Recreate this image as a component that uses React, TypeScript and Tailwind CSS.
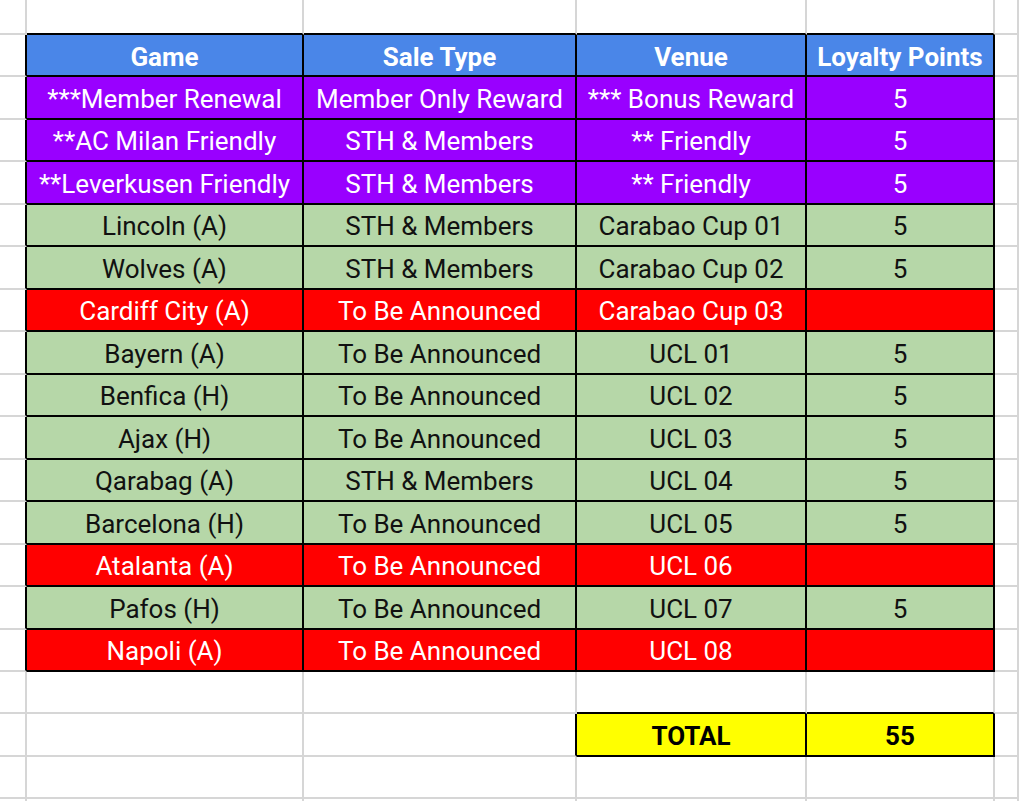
import React from "react";

type Tone = "blue" | "purple" | "green" | "red" | "yellow" | "none";

const bgMap: Record<Tone, string> = {
  blue: "bg-[#4a86e8] text-white font-bold",
  purple: "bg-[#9900ff] text-white",
  green: "bg-[#b6d7a8] text-[#111111]",
  red: "bg-[#ff0000] text-white",
  yellow: "bg-[#ffff00] text-black font-bold",
  none: "bg-white",
};

function Cell({
  text = "",
  tone = "none",
  r = false,
  b = false,
}: {
  text?: string;
  tone?: Tone;
  r?: boolean;
  b?: boolean;
}) {
  return (
    <div
      className={`flex items-center justify-center overflow-hidden whitespace-nowrap pt-[3px] border-r-2 border-b-2 ${
        r ? "border-r-black" : "border-r-[#d6d6d6]"
      } ${b ? "border-b-black" : "border-b-[#d6d6d6]"} ${bgMap[tone]}`}
    >
      {text}
    </div>
  );
}

const rows: { c: [string, string, string, string]; t: Tone }[] = [
  { c: ["Game", "Sale Type", "Venue", "Loyalty Points"], t: "blue" },
  { c: ["***Member Renewal", "Member Only Reward", "*** Bonus Reward", "5"], t: "purple" },
  { c: ["**AC Milan Friendly", "STH & Members", "** Friendly", "5"], t: "purple" },
  { c: ["**Leverkusen Friendly", "STH & Members", "** Friendly", "5"], t: "purple" },
  { c: ["Lincoln (A)", "STH & Members", "Carabao Cup 01", "5"], t: "green" },
  { c: ["Wolves (A)", "STH & Members", "Carabao Cup 02", "5"], t: "green" },
  { c: ["Cardiff City (A)", "To Be Announced", "Carabao Cup 03", ""], t: "red" },
  { c: ["Bayern (A)", "To Be Announced", "UCL 01", "5"], t: "green" },
  { c: ["Benfica (H)", "To Be Announced", "UCL 02", "5"], t: "green" },
  { c: ["Ajax (H)", "To Be Announced", "UCL 03", "5"], t: "green" },
  { c: ["Qarabag (A)", "STH & Members", "UCL 04", "5"], t: "green" },
  { c: ["Barcelona (H)", "To Be Announced", "UCL 05", "5"], t: "green" },
  { c: ["Atalanta (A)", "To Be Announced", "UCL 06", ""], t: "red" },
  { c: ["Pafos (H)", "To Be Announced", "UCL 07", "5"], t: "green" },
  { c: ["Napoli (A)", "To Be Announced", "UCL 08", ""], t: "red" },
];

export default function App() {
  return (
    <div
      className="w-[1019px] h-[801px] overflow-hidden bg-white text-[26px] leading-none"
      style={{ fontFamily: "Roboto, 'Noto Sans', sans-serif" }}
    >
      <div className="grid grid-cols-[27px_277px_273px_230px_188px_1fr] grid-rows-[35px_42px_repeat(14,42.5px)_42px_43px_42px_20px]">
        {/* top blank row */}
        <Cell />
        <Cell b />
        <Cell b />
        <Cell b />
        <Cell b />
        <Cell />
        {rows.map((row, i) => (
          <React.Fragment key={i}>
            <Cell r />
            {row.c.map((t, j) => (
              <Cell key={j} text={t} tone={row.t} r b />
            ))}
            <Cell />
          </React.Fragment>
        ))}
        {/* empty row */}
        <Cell />
        <Cell />
        <Cell />
        <Cell b />
        <Cell b />
        <Cell />
        {/* total row */}
        <Cell />
        <Cell />
        <Cell r />
        <Cell text="TOTAL" tone="yellow" r b />
        <Cell text="55" tone="yellow" r b />
        <Cell />
        {/* empty row */}
        <Cell />
        <Cell />
        <Cell />
        <Cell />
        <Cell />
        <Cell />
        <Cell />
        <Cell />
        <Cell />
        <Cell />
        <Cell />
        <Cell />
      </div>
    </div>
  );
}
